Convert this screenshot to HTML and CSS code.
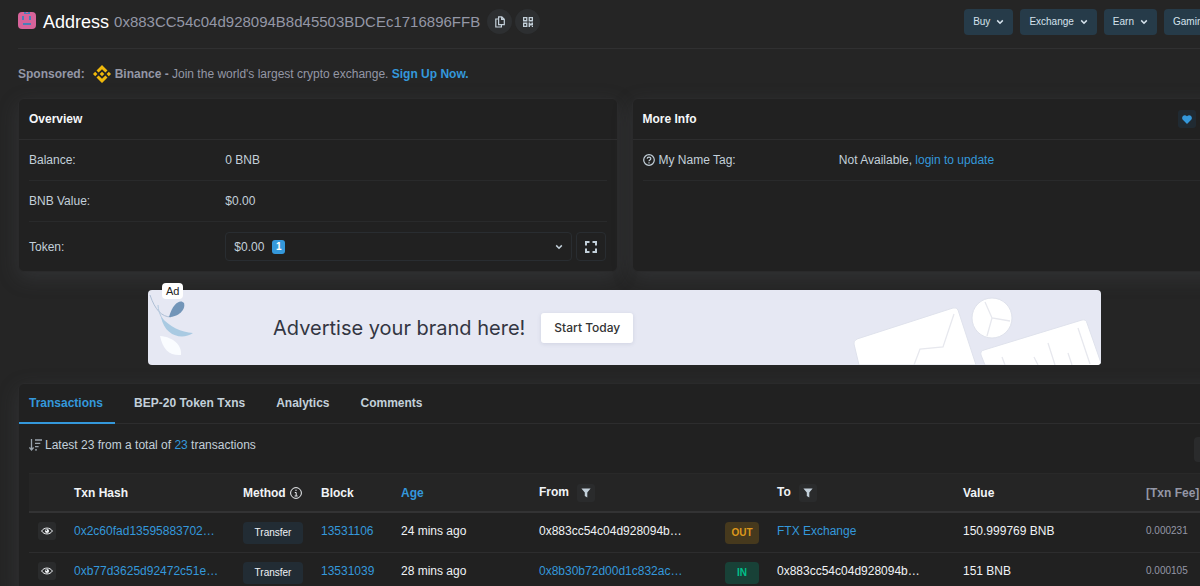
FILE: index.html
```html
<!DOCTYPE html>
<html lang="en">
<head>
  <meta charset="UTF-8">
  <meta name="viewport" content="width=device-width, initial-scale=1.0">
  <title>Address 0x883CC54c04d928094B8d45503BDCEc1716896FFB</title>
  <link rel="stylesheet" href="styles.css">
</head>
<body>
  <!-- shared icons -->
  <svg class="sprite" aria-hidden="true">
    <symbol id="chevron" viewBox="0 0 8 6"><path d="M1.2 1.4 4 4.2 6.8 1.4" fill="none" stroke="currentColor" stroke-width="1.5"/></symbol>
    <symbol id="filter" viewBox="0 0 10 10"><path d="M.4.4h9.2L6.3 4.6v5L3.8 7.9V4.6z" fill="currentColor"/></symbol>
    <symbol id="eye" viewBox="0 0 12 8"><path d="M.6 4C3 .1 9 .1 11.4 4 9 7.9 3 7.9.6 4z" fill="none" stroke="currentColor"/><circle cx="6" cy="4" r="2.1" fill="currentColor"/><circle cx="5.3" cy="3.3" r=".7" fill="#2a2b2c"/></symbol>
  </svg>

  <div class="container">
    <header class="page-header">
      <div class="title">
        <svg class="avatar" width="18" height="17" viewBox="0 0 18 17">
          <rect width="18" height="17" rx="4" fill="#d7639a"/>
          <path d="M6 0h2v1h2V0h2v2H6zM4 4h2v4H4zM11 4h2v4h-2zM5 11h8v2H5z" fill="#4a7fb8"/>
        </svg>
        <h1>Address</h1>
        <span class="address">0x883CC54c04d928094B8d45503BDCEc1716896FFB</span>
        <button class="round-btn" aria-label="Copy address">
          <svg width="10" height="12" viewBox="0 0 10 12" fill="none" stroke="currentColor" stroke-width="1.2"><path d="M3.6.8h3.2L9.3 3.2v5.4H3.6zM6.6.8v2.6h2.6M3.6 3H.8v8h5.6V8.8"/></svg>
        </button>
        <button class="round-btn" aria-label="QR code">
          <svg width="10" height="10" viewBox="0 0 10 10" fill="currentColor"><path fill-rule="evenodd" d="M0 0h4.4v4.4H0zM1.3 1.3v1.8h1.8V1.3zM5.6 0H10v4.4H5.6zM6.9 1.3v1.8h1.8V1.3zM0 5.6h4.4V10H0zM1.3 6.9v1.8h1.8V6.9z"/><path d="M5.6 5.6h1.5v1h1.4v-1H10v3H7v1.4H5.6zM8.8 9H10v1H8.8z"/></svg>
        </button>
      </div>
      <nav class="menu">
        <button class="menu-btn">Buy <svg width="8" height="6"><use href="#chevron"/></svg></button>
        <button class="menu-btn">Exchange <svg width="8" height="6"><use href="#chevron"/></svg></button>
        <button class="menu-btn">Earn <svg width="8" height="6"><use href="#chevron"/></svg></button>
        <button class="menu-btn">Gaming <svg width="8" height="6"><use href="#chevron"/></svg></button>
      </nav>
    </header>

    <div class="sponsored">
      <b>Sponsored:</b>
      <svg class="binance" width="18" height="18" viewBox="0 0 18 18" fill="#f0b90b"><path d="M9 0 14.500 5.500 12.400 7.600 9 4.200 5.600 7.600 3.500 5.500zM9 18 3.500 12.500 5.600 10.400 9 13.800 12.400 10.400 14.500 12.500zM2.200 6.800 4.400 9 2.200 11.200 0 9zM15.800 6.800 18 9 15.800 11.200 13.600 9zM9 6.700 11.300 9 9 11.300 6.700 9z"/></svg>
      <p><b>Binance -</b> Join the world's largest crypto exchange. <a href="#"><b>Sign Up Now.</b></a></p>
    </div>

    <div class="cards">
      <section class="card">
        <h2 class="card-header">Overview</h2>
        <div class="card-body">
          <div class="row"><span>Balance:</span><span>0 BNB</span></div>
          <div class="row"><span>BNB Value:</span><span>$0.00</span></div>
          <div class="row token-row">
            <span>Token:</span>
            <div class="token">
              <button class="token-select">$0.00 <span class="count">1</span><svg width="8" height="6"><use href="#chevron"/></svg></button>
              <button class="expand-btn" aria-label="View tokens">
                <svg width="12" height="12" viewBox="0 0 12 12" fill="none" stroke="currentColor" stroke-width="2"><path d="M1 4.500V1h3.500M7.500 1H11v3.500M11 7.500V11H7.500M4.500 11H1V7.500"/></svg>
              </button>
            </div>
          </div>
        </div>
      </section>

      <section class="card">
        <h2 class="card-header">More Info
          <span class="card-tools">
            <button class="small-btn heart" aria-label="Add to favourites"><svg width="10" height="9" viewBox="0 0 10 9" fill="currentColor"><path d="M5 9 .8 4.800C-1.400 2 2.300-1.700 5 1.200 7.700-1.700 11.400 2 9.200 4.800z"/></svg></button>
          </span>
        </h2>
        <div class="card-body">
          <div class="row">
            <span class="name-tag">
              <svg width="12" height="12" viewBox="0 0 12 12" fill="none" stroke="currentColor" stroke-width="1.200"><circle cx="6" cy="6" r="5.300"/><path d="M4.200 4.800C4.200 2.600 7.800 2.600 7.800 4.700 7.800 6 6 5.800 6 7.200M6 8.200v1.200"/></svg>
              My Name Tag:
            </span>
            <span>Not Available, <a href="#">login to update</a></span>
          </div>
        </div>
      </section>
    </div>

    <aside class="banner">
      <span class="ad-label">Ad</span>
      <svg class="leaves" width="50" height="75" viewBox="0 0 50 75">
        <path d="M2 5C7 20 14 27 23 27" fill="none" stroke="#aebfd5"/>
        <path d="M21 27C25 12 33 9 36 13 38 20 30 27 21 27z" fill="#7295b8"/>
        <path d="M10 15C10 20 12 25 15 30" fill="none" stroke="#b4c9df"/>
        <path d="M13 27C22 37 33 42 45 43 35 50 17 47 13 27z" fill="#a9cae2"/>
        <path d="M12 46C15 60 22 66 33 65 34 56 26 47 12 46z" fill="#fafcff"/>
      </svg>
      <span class="slogan">Advertise your brand here!</span>
      <button class="start-btn">Start Today</button>
      <svg class="shapes" width="252" height="75" viewBox="0 0 252 75">
        <g fill="#fff" stroke="#dfe2ec">
          <path d="M10 75 5 54Q4 51 8 49L104 18Q108 17 109 20L127 75z"/>
          <circle cx="143" cy="28" r="20"/>
          <path d="m136 75-4-10q-1-4 3-5l98-30q4-1 5 3l14 40v3z"/>
        </g>
        <g fill="none" stroke="#e7e8ee" stroke-width="1.300">
          <path d="M65 75 71 59 94 57 105 24M136 12 143 28 161 31M143 28 138 46"/>
          <path d="m153 67 3 8M185 67l4 8M199 53l7 22M219 63l4 12M229 38l12 36"/>
        </g>
      </svg>
    </aside>

    <section class="card txns">
      <nav class="tabs">
        <a class="active" href="#">Transactions</a>
        <a href="#">BEP-20 Token Txns</a>
        <a href="#">Analytics</a>
        <a href="#">Comments</a>
      </nav>
      <div class="summary">
        <svg width="13" height="12" viewBox="0 0 13 12" fill="none" stroke="#9aa4ae" stroke-width="1.300"><path d="M2.500 0v11M.4 8.500l2.100 2.500 2.100-2.500M6 1h7M6 4.300h5.300M6 7.600h3.600M6 10.900h2"/></svg>
        <p>Latest 23 from a total of <a href="#">23</a> transactions</p>
        <button class="more-btn" aria-label="More"></button>
      </div>
      <table>
        <colgroup>
          <col class="c-eye"><col class="c-hash"><col class="c-method"><col class="c-block"><col class="c-age">
          <col class="c-from"><col class="c-dir"><col class="c-to"><col class="c-value"><col>
        </colgroup>
        <thead>
          <tr>
            <th></th>
            <th>Txn Hash</th>
            <th>Method <svg class="info" width="12" height="12" viewBox="0 0 12 12" fill="none" stroke="currentColor"><circle cx="6" cy="6" r="5.400"/><path d="M6 2.700v1.300M4.800 5.500H6.200V8.800M4.600 9h3"/></svg></th>
            <th>Block</th>
            <th><a href="#">Age</a></th>
            <th>From <button class="small-btn filter" aria-label="Filter from"><svg width="10" height="10"><use href="#filter"/></svg></button></th>
            <th></th>
            <th>To <button class="small-btn filter" aria-label="Filter to"><svg width="10" height="10"><use href="#filter"/></svg></button></th>
            <th>Value</th>
            <th class="fee-head">[Txn Fee]</th>
          </tr>
        </thead>
        <tbody>
          <tr>
            <td><button class="small-btn eye" aria-label="Preview"><svg width="12" height="8"><use href="#eye"/></svg></button></td>
            <td><a href="#">0x2c60fad13595883702…</a></td>
            <td><span class="method">Transfer</span></td>
            <td><a href="#">13531106</a></td>
            <td>24 mins ago</td>
            <td>0x883cc54c04d928094b…</td>
            <td><span class="dir out">OUT</span></td>
            <td><a href="#">FTX Exchange</a></td>
            <td>150.999769 BNB</td>
            <td class="fee">0.000231</td>
          </tr>
          <tr>
            <td><button class="small-btn eye" aria-label="Preview"><svg width="12" height="8"><use href="#eye"/></svg></button></td>
            <td><a href="#">0xb77d3625d92472c51e…</a></td>
            <td><span class="method">Transfer</span></td>
            <td><a href="#">13531039</a></td>
            <td>28 mins ago</td>
            <td><a href="#">0x8b30b72d00d1c832ac…</a></td>
            <td><span class="dir in">IN</span></td>
            <td>0x883cc54c04d928094b…</td>
            <td>151 BNB</td>
            <td class="fee">0.000105</td>
          </tr>
        </tbody>
      </table>
    </section>
  </div>
</body>
</html>
```
FILE: styles.css
```css
* {
  margin: 0;
  padding: 0;
  box-sizing: border-box;
}

body {
  font-family: "Liberation Sans", Helvetica, Arial, sans-serif;
  font-size: 12px;
  line-height: 18px;
  background: #252525;
  color: #c3d0da;
  overflow: hidden;
}

a {
  color: #3498db;
  text-decoration: none;
}

button {
  font: inherit;
  color: inherit;
  border: none;
  cursor: pointer;
  display: inline-flex;
  align-items: center;
  justify-content: center;
}

.sprite {
  display: none;
}

/* content runs past the right edge of the window */
.container {
  margin: 0 -31px 0 18px;
}

.page-header {
  display: flex;
  justify-content: space-between;
  height: 49px;
  padding-top: 9px;
  border-bottom: 1px solid #303031;
}

.title {
  display: flex;
  align-items: center;
  height: 25px;
}

.avatar {
  margin: 0 7px 3px 0;
}

h1 {
  font-size: 18px;
  font-weight: normal;
  color: #fff;
  margin-right: 5px;
}

.address {
  font-size: 15px;
  color: #9497a6;
  margin-right: 7px;
}

.round-btn {
  width: 25px;
  height: 25px;
  border-radius: 50%;
  background: #2d2f31;
  color: #c3d0da;
  margin-right: 3px;
}

.menu {
  display: flex;
  gap: 7px;
}

.menu-btn {
  height: 26px;
  padding: 0 9px;
  gap: 6px;
  border-radius: 4px;
  background: #263b49;
  color: #d5e2ec;
  font-size: 10px;
}

.sponsored {
  display: flex;
  align-items: center;
  height: 49px;
  color: #9497a6;
}

.binance {
  margin: 0 4px 0 8px;
}

.cards {
  display: grid;
  grid-template-columns: 1fr 1fr;
  gap: 14px;
}

.card {
  background: #212121;
  border: 1px solid #2a2a2b;
  border-radius: 6px;
  box-shadow: 0 6px 20px rgba(82, 85, 92, 0.28);
}

.card-header {
  display: flex;
  align-items: center;
  justify-content: space-between;
  height: 41px;
  padding: 0 10px;
  border-bottom: 1px solid #2d2d2e;
  font-size: 12px;
  color: #f5f7fa;
}

.card-tools {
  display: flex;
  margin-right: 24px;
}

.card-body {
  padding: 0 10px;
}

.row {
  display: grid;
  grid-template-columns: 34% 66%;
  align-items: center;
  height: 41px;
  border-bottom: 1px solid #292a2b;
}

.token-row {
  height: 49px;
  border-bottom: none;
}

.token {
  display: flex;
  gap: 4px;
}

.token-select {
  flex: 1;
  justify-content: flex-start;
  height: 29px;
  padding: 0 8px;
  background: none;
  border: 1px solid #292d31;
  border-radius: 4px;
}

.token-select svg {
  margin-left: auto;
}

.count {
  margin-left: 8px;
  width: 13px;
  line-height: 14px;
  border-radius: 3px;
  background: #3498db;
  color: #fff;
  font-size: 10px;
  font-weight: bold;
}

.expand-btn {
  width: 30px;
  height: 29px;
  background: none;
  border: 1px solid #292d31;
  border-radius: 4px;
}

.name-tag {
  display: flex;
  align-items: center;
  gap: 4px;
}

.small-btn {
  width: 18px;
  height: 18px;
  border-radius: 3px;
  background: #2a2b2c;
}

.heart {
  background: #202a32;
  color: #3498db;
}

.banner {
  position: relative;
  display: flex;
  align-items: center;
  width: 953px;
  height: 75px;
  margin: 18px auto;
  border-radius: 4px;
  background: #e6e8f3;
}

.ad-label {
  position: absolute;
  top: -7px;
  left: 14px;
  padding: 0 4px;
  line-height: 16px;
  border-radius: 4px;
  background: #fff;
  color: #222;
  font-size: 11px;
}

.slogan {
  margin: 0 16px 0 75px;
  font-family: Inter, sans-serif;
  font-size: 20px;
  color: #333642;
}

.start-btn {
  height: 30px;
  padding: 0 13px;
  border-radius: 3px;
  background: #fff;
  color: #333;
  box-shadow: 0 1px 4px rgba(80, 90, 130, 0.15);
  font-family: Inter, sans-serif;
  font-size: 12px;
  font-weight: 500;
}

.shapes {
  margin-left: auto;
  border-radius: 0 0 4px 0;
}

.tabs {
  display: flex;
  height: 40px;
  border-bottom: 1px solid #2d2d2e;
}

.tabs a {
  height: 40px;
  padding: 0 12px 0 10px;
  margin-right: 9px;
  line-height: 38px;
  font-weight: bold;
  color: #c3d0da;
}

.tabs .active {
  color: #3498db;
  border-bottom: 2px solid #3498db;
}

.summary {
  display: flex;
  align-items: center;
  gap: 3px;
  height: 49px;
  padding: 0 8px 7px 10px;
}

.more-btn {
  width: 28px;
  height: 25px;
  margin: 8px 0 0 auto;
  border-radius: 4px;
  background: #2a2b2c;
}

table {
  width: calc(100% - 20px);
  margin: 0 10px;
  table-layout: fixed;
  border-collapse: separate;
  border-spacing: 0;
  color: #f0f3f6;
}

.c-eye { width: 36px; }
.c-hash { width: 169px; }
.c-method { width: 78px; }
.c-block { width: 80px; }
.c-age { width: 138px; }
.c-from { width: 186px; }
.c-dir { width: 52px; }
.c-to { width: 186px; }
.c-value { width: 183px; }

th,
td {
  height: 40px;
  padding: 0 0 0 9px;
  text-align: left;
  white-space: nowrap;
  border-bottom: 1px solid #2d2d2e;
}

th {
  background: #252525;
  border-top: 1px solid #292929;
  border-bottom: 2px solid #333334;
}

td {
  padding-bottom: 3px;
}

.info {
  margin-left: 1px;
  vertical-align: -2px;
}

.filter {
  margin-left: 5px;
  color: #c3d0da;
  vertical-align: middle;
}

.eye {
  display: flex;
}

.method,
.dir {
  display: block;
  height: 22px;
  margin-top: 3px;
  border-radius: 4px;
  line-height: 22px;
  font-size: 10px;
  text-align: center;
}

.method {
  width: 60px;
  background: #222c34;
}

.dir {
  width: 34px;
  font-weight: bold;
}

.out {
  background: #46391d;
  color: #dd981c;
}

.in {
  background: #184137;
  color: #00c08b;
}

.fee-head {
  color: #9497a6;
}

.fee {
  color: #9497a6;
  font-size: 10px;
}
```
